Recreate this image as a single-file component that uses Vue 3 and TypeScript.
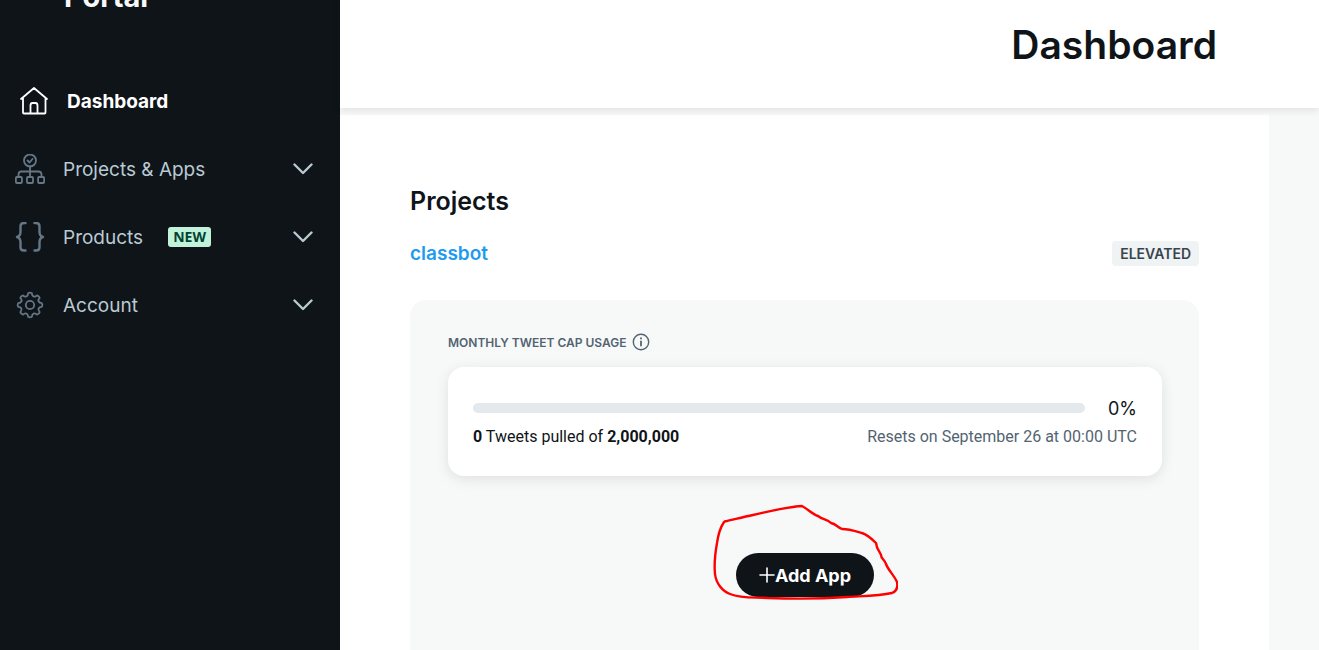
<script setup lang="ts">
interface NavItem {
  label: string
  icon: 'projects' | 'products' | 'account'
  badge?: string
}

const navItems: NavItem[] = [
  { label: 'Projects & Apps', icon: 'projects' },
  { label: 'Products', icon: 'products', badge: 'NEW' },
  { label: 'Account', icon: 'account' },
]

const pulled = 0
const cap = 2000000
const percent = Math.round((pulled / cap) * 100)

// Outline of an eight-toothed cog centred on (15, 15).
const cog = (() => {
  const parts: string[] = []
  const at = (deg: number, r: number) => {
    const a = (deg * Math.PI) / 180
    return `${(15 + r * Math.sin(a)).toFixed(2)} ${(15 - r * Math.cos(a)).toFixed(2)}`
  }
  for (let i = 0; i < 8; i++) {
    const c = i * 45
    parts.push(`${i === 0 ? 'M' : 'L'}${at(c - 9, 12)}`)
    parts.push(`Q${at(c, 13)} ${at(c + 9, 12)}`)
    parts.push(`C${at(c + 13, 8.6)} ${at(c + 32, 8.6)} ${at(c + 36, 12)}`)
  }
  return parts.join('') + 'Z'
})()
</script>

<template>
  <div class="page">
    <aside class="sidebar">
      <div class="brand">Portal</div>
      <nav class="nav">
        <a class="item active" href="#dashboard">
          <svg class="icon" viewBox="0 0 30 30" aria-hidden="true">
            <path d="M2 13 15 2 28 13M4 12V26.5Q4 27.5 5 27.5H25.500Q26.500 27.500 26.500 26.500V12M11.500 27V19.500Q11.500 17 13.500 17H16.500Q18.500 17 18.500 19.500V27" />
          </svg>
          <span>Dashboard</span>
        </a>
        <button v-for="item in navItems" :key="item.label" class="item" type="button">
          <svg class="icon" viewBox="0 0 30 30" aria-hidden="true">
            <template v-if="item.icon === 'projects'">
              <circle cx="15" cy="6.500" r="6" />
              <path d="M12.500 6.500 14.500 8.500 17.500 5M15 12.500V23M3.500 23V20.500Q3.500 17.500 6.500 17.500H23.500Q26.500 17.500 26.500 20.500V23" />
              <rect x="0.900" y="23" width="6" height="6" rx="1" />
              <rect x="12" y="23" width="6" height="6" rx="1" />
              <rect x="23.100" y="23" width="6" height="6" rx="1" />
            </template>
            <path
              v-else-if="item.icon === 'products'"
              class="thick"
              d="M10.500 1H9Q5.500 1 5.500 4.500V10Q5.500 14 2 15Q5.500 16 5.500 20V25.500Q5.500 28.500 9 28.500H10.500M19.500 1H21Q24.500 1 24.500 4.500V10Q24.500 14 28 15Q24.500 16 24.500 20V25.500Q24.500 28.500 21 28.500H19.500"
            />
            <template v-else>
              <path :d="cog" />
              <circle cx="15" cy="15" r="4.200" />
            </template>
          </svg>
          <span>{{ item.label }}</span>
          <span v-if="item.badge" class="new">{{ item.badge }}</span>
          <svg class="chevron" viewBox="0 0 20 12" aria-hidden="true">
            <path d="M1.500 1.500 10 10 18.500 1.500" />
          </svg>
        </button>
      </nav>
    </aside>

    <div class="main">
      <header class="header">
        <h1>Dashboard</h1>
      </header>
      <main class="content">
        <h2>Projects</h2>
        <div class="project">
          <a href="#classbot">classbot</a>
          <span class="level">ELEVATED</span>
        </div>
        <section class="panel">
          <div class="caption">
            <span>MONTHLY TWEET CAP USAGE</span>
            <svg viewBox="0 0 18 18" aria-hidden="true">
              <circle cx="9" cy="9" r="7.700" />
              <path class="stem" d="M9 8.500V12.500M9 5.200V5.600" />
            </svg>
          </div>
          <div class="card">
            <div class="meter">
              <div class="track"><div class="fill" :style="{ width: percent + '%' }"></div></div>
              <span class="percent">{{ percent }}%</span>
            </div>
            <div class="details">
              <span><b>{{ pulled }}</b> Tweets pulled of <b>{{ cap.toLocaleString('en-US') }}</b></span>
              <span class="resets">Resets on September 26 at 00:00 UTC</span>
            </div>
          </div>
          <div class="action">
            <button class="add" type="button">
              <svg viewBox="0 0 16 16" aria-hidden="true"><path d="M8 1V15M1 8H15" /></svg>
              <span>Add App</span>
            </button>
            <svg class="scribble" viewBox="0 0 190 100" aria-hidden="true">
              <path d="M16 20C12 26 10 34 9 41C7 52 6 62 7 72C8 81 14 89 22 92C34 97 47 95 60 96C85 97 112 97 139 95C155 94 171 94 184 91C189 89 190 85 189 80C186 73 180 68 178 62C177 58 173 57 173 53C171 48 169 48 168 41C164 37 160 33 154 31C147 29 141 27 134 27C129 25 128 22 123 21C119 17 115 18 110 14C104 12 100 7 94 4C78 5 63 9 45 13C35 15 24 18 19 19Q17 19 16 20Z" />
            </svg>
          </div>
        </section>
      </main>
    </div>
  </div>
</template>

<style>
body {
  margin: 0;
}
</style>

<style scoped>
.page {
  display: flex;
  height: 100vh;
  overflow: hidden;
  background: #f7f9f9;
  color: #0f1419;
  font-family: Inter, "Liberation Sans", sans-serif;
}
svg {
  fill: none;
  stroke: currentColor;
  stroke-linecap: round;
  stroke-linejoin: round;
  flex: none;
}
.sidebar {
  width: 340px;
  flex: none;
  background: #0f1419;
}
.brand {
  height: 36px;
  margin-top: -21px;
  margin-bottom: 52px;
  padding-left: 64px;
  color: #f7f9f9;
  font-size: 29px;
  font-weight: 700;
  line-height: 36px;
}
.item {
  display: flex;
  align-items: center;
  gap: 18px;
  box-sizing: border-box;
  width: 100%;
  height: 68px;
  padding: 0 27px 0 15px;
  border: 0;
  background: none;
  color: #b9cad3;
  font-family: inherit;
  font-size: 19px;
  text-align: left;
  text-decoration: none;
  cursor: pointer;
}
.item.active {
  padding-left: 19px;
  color: #fff;
  font-weight: 700;
}
.icon {
  width: 30px;
  height: 30px;
  color: #657786;
  stroke-width: 1.8;
}
.thick {
  stroke-width: 2.4;
}
.active .icon {
  color: #fff;
}
.new {
  margin-left: 7px;
  padding: 0 5px;
  border-radius: 3px;
  background: #c2f1dc;
  color: #00442f;
  font-family: "Noto Sans", sans-serif;
  font-size: 14px;
  font-weight: 700;
  line-height: 20px;
}
.chevron {
  width: 20px;
  height: 12px;
  margin-left: auto;
  stroke-width: 2.4;
}
.main {
  display: flex;
  flex: 1;
  flex-direction: column;
  min-width: 0;
}
.header {
  z-index: 1;
  box-sizing: border-box;
  height: 108px;
  flex: none;
  padding: 20px 102px 0 0;
  background: #fff;
  box-shadow: 0 2px 8px rgba(0, 0, 0, 0.1);
  text-align: right;
}
h1 {
  margin: 0;
  font-size: 39px;
  font-weight: 600;
  line-height: 50px;
}
.content {
  display: flex;
  flex: 1;
  flex-direction: column;
  margin: 7px 50px 0 0;
  padding: 70px 70px 0;
  background: #fff;
}
h2 {
  margin: 0;
  font-size: 25px;
  font-weight: 600;
  line-height: 32px;
}
.project {
  display: flex;
  align-items: center;
  justify-content: space-between;
  height: 26px;
  margin: 23px 0 34px;
}
.project a {
  color: #1d9bf0;
  font-size: 19px;
  font-weight: 600;
  text-decoration: none;
}
.level {
  padding: 0 8px;
  border-radius: 4px;
  background: #eff3f4;
  color: #38444d;
  font-size: 14px;
  font-weight: 600;
  line-height: 25px;
}
.panel {
  flex: 1;
  padding: 32px 37px 0 38px;
  border-radius: 16px 16px 0 0;
  background: #f7f9f9;
}
.caption {
  display: flex;
  align-items: center;
  gap: 5px;
  height: 20px;
  color: #536471;
  font-size: 12px;
  font-weight: 600;
}
.caption svg {
  width: 18px;
  height: 18px;
  stroke-width: 1.4;
}
.caption .stem {
  stroke-width: 1.8;
}
.card {
  box-sizing: border-box;
  height: 109px;
  margin-top: 15px;
  padding: 29px 25px 0;
  border-radius: 16px;
  background: #fff;
  box-shadow: 0 3px 14px rgba(0, 0, 0, 0.1);
}
.meter {
  display: flex;
  align-items: center;
  gap: 23px;
  height: 24px;
}
.track {
  flex: 1;
  height: 10px;
  border-radius: 5px;
  background: #e3e9ec;
}
.fill {
  height: 10px;
  border-radius: 5px;
  background: #1d9bf0;
}
.percent {
  font-size: 18px;
}
.details {
  display: flex;
  justify-content: space-between;
  margin-top: 7px;
  font-family: Roboto, "Liberation Sans", sans-serif;
  font-size: 16px;
  line-height: 20px;
}
.details b {
  font-weight: 700;
}
.resets {
  color: #536471;
}
.action {
  position: relative;
  display: flex;
  justify-content: center;
  margin-top: 77px;
}
.add {
  display: flex;
  align-items: center;
  justify-content: center;
  width: 138px;
  height: 44px;
  padding: 0;
  border: 0;
  border-radius: 22px;
  background: #0f1419;
  color: #fff;
  font-family: inherit;
  font-size: 18px;
  font-weight: 700;
}
.add svg {
  width: 16px;
  height: 16px;
  stroke-width: 1.6;
}
.scribble {
  position: absolute;
  top: -51px;
  left: calc(50% - 97px);
  width: 190px;
  height: 100px;
  color: #f00;
  stroke-width: 2.4;
  pointer-events: none;
}
</style>
